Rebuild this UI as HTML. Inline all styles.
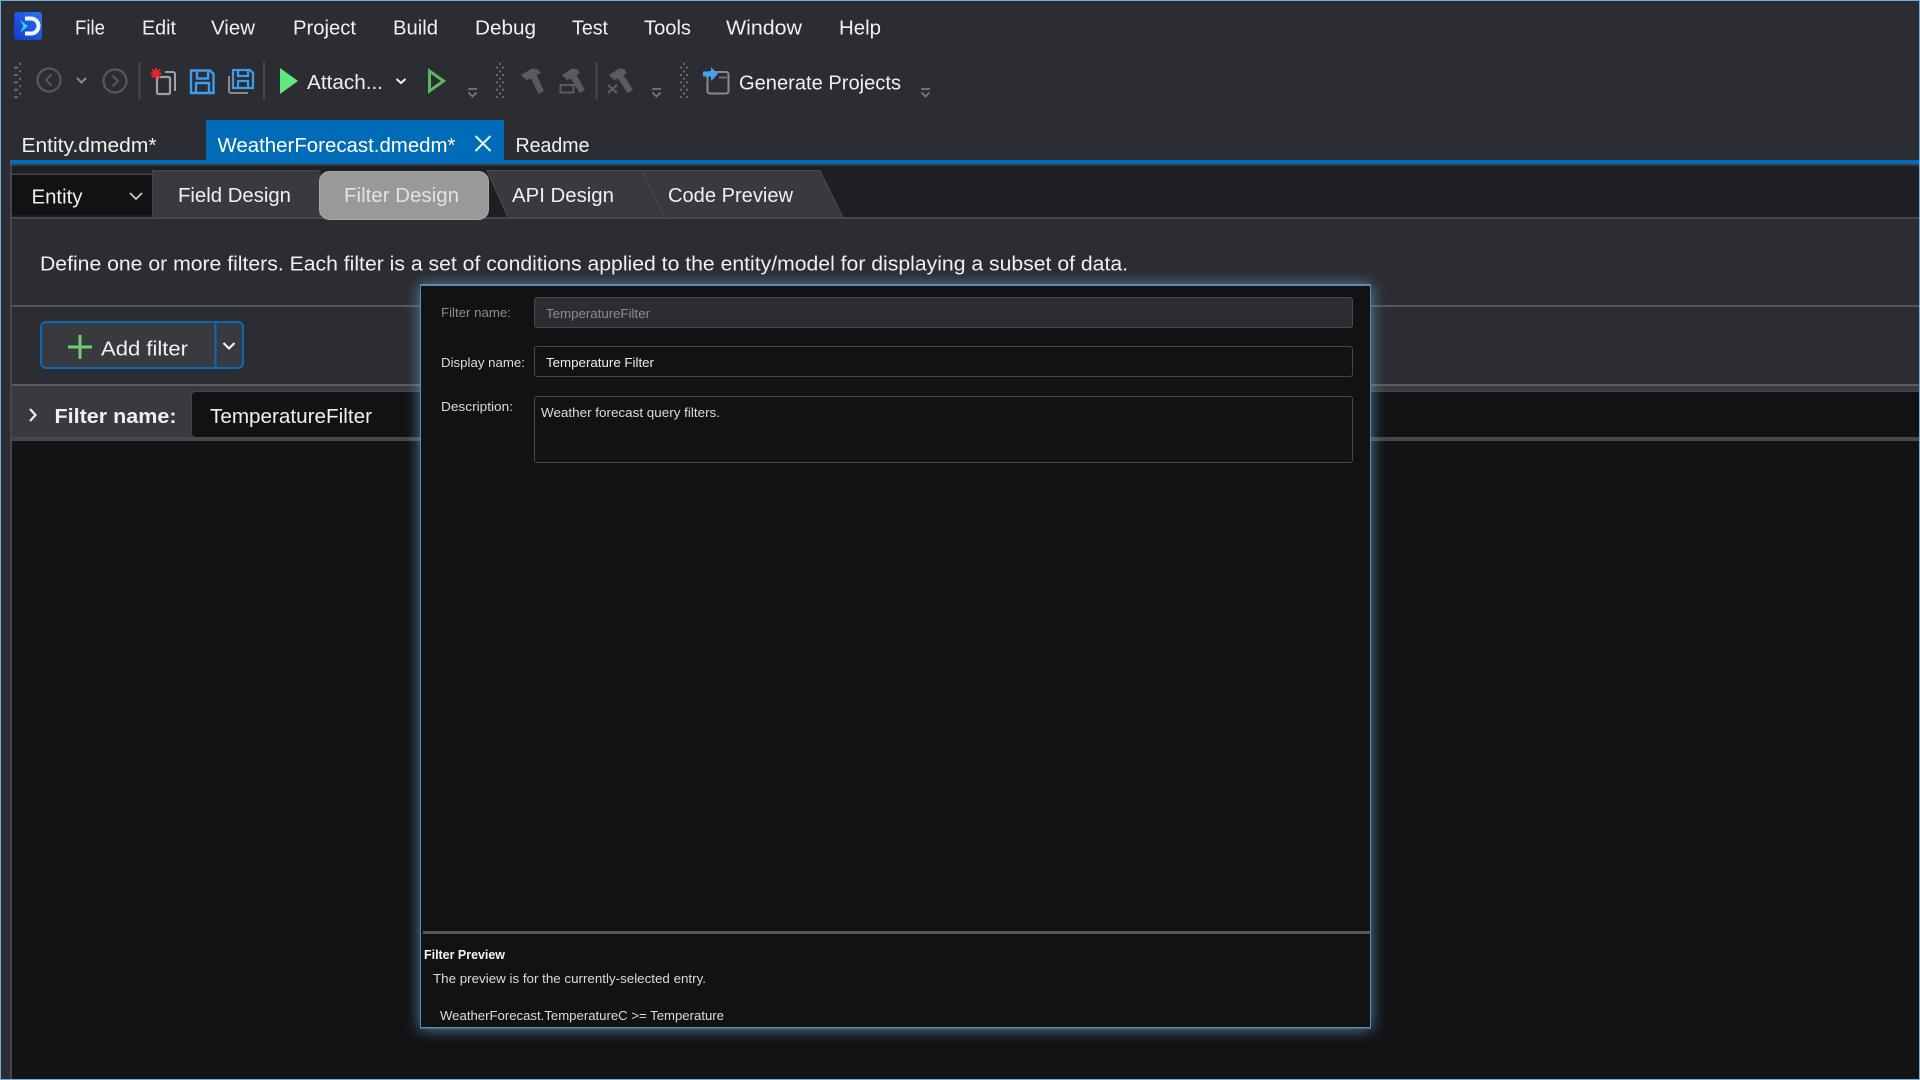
<!DOCTYPE html>
<html lang="en"><head><meta charset="utf-8"><title>Filter Design</title>
<style>
html,body{margin:0;padding:0;width:1920px;height:1080px;overflow:hidden;background:#2c2d33}
svg{display:block}
text{font-family:"Liberation Sans",sans-serif;font-size:20px;fill:#f0f0f0}
.s{font-size:13px;fill:#dcdcdc}
</style></head><body>
<svg width="1920" height="1080" viewBox="0 0 1920 1080" xmlns="http://www.w3.org/2000/svg">
<defs>
<linearGradient id="lg" x1="0" y1="1" x2="1" y2="0"><stop offset="0" stop-color="#1238c8"/><stop offset="1" stop-color="#2b74f2"/></linearGradient>
<filter id="glow" x="-5%" y="-5%" width="110%" height="110%"><feGaussianBlur stdDeviation="7.5"/></filter>
<pattern id="grip" width="8" height="7.4" patternUnits="userSpaceOnUse"><rect x="0" y="0" width="2" height="2" fill="#6a6b70"/><rect x="6" y="0" width="2" height="2" fill="#6a6b70"/><rect x="3" y="3.7" width="2" height="2" fill="#6a6b70"/></pattern>
</defs>
<rect width="1920" height="1080" fill="#2c2d33"/>

<!-- logo -->
<rect x="14" y="12" width="28" height="28" rx="3" fill="url(#lg)"/>
<path d="M25 18.500h6a7.500 7.500 0 0 1 0 15h-6" fill="none" stroke="#f2f6ff" stroke-width="4"/>
<path d="M20 20l8 6-8 7 3.500-7z" fill="#28e0d8"/>

<!-- menu -->
<g>
<text x="75" y="34.500" textLength="30" lengthAdjust="spacingAndGlyphs">File</text>
<text x="142" y="34.500" textLength="34" lengthAdjust="spacingAndGlyphs">Edit</text>
<text x="211" y="34.500" textLength="44" lengthAdjust="spacingAndGlyphs">View</text>
<text x="293" y="34.500" textLength="63" lengthAdjust="spacingAndGlyphs">Project</text>
<text x="393" y="34.500" textLength="45" lengthAdjust="spacingAndGlyphs">Build</text>
<text x="475" y="34.500" textLength="61" lengthAdjust="spacingAndGlyphs">Debug</text>
<text x="572" y="34.500" textLength="36" lengthAdjust="spacingAndGlyphs">Test</text>
<text x="644" y="34.500" textLength="47" lengthAdjust="spacingAndGlyphs">Tools</text>
<text x="726" y="34.500" textLength="76" lengthAdjust="spacingAndGlyphs">Window</text>
<text x="839" y="34.500" textLength="42" lengthAdjust="spacingAndGlyphs">Help</text>
</g>

<!-- toolbar -->
<rect x="13" y="61" width="8" height="37" fill="url(#grip)"/>
<rect x="496" y="61" width="8" height="37" fill="url(#grip)"/>
<rect x="680" y="61" width="8" height="37" fill="url(#grip)"/>
<g fill="none" stroke="#57585c" stroke-width="2.2">
<circle cx="49" cy="80" r="11.500"/><path d="M51.500 74.500L46 80l5.500 5.500"/>
<circle cx="115" cy="81" r="11.500"/><path d="M112.500 75.500L118 81l-5.500 5.500"/>
</g>
<path d="M77 78l4.500 4.500L86 78" fill="none" stroke="#8a8b8f" stroke-width="2"/>
<rect x="138.500" y="62" width="2" height="38" fill="#46474d"/>
<rect x="263" y="62" width="2" height="38" fill="#46474d"/>
<rect x="595.500" y="62" width="2" height="38" fill="#46474d"/>
<!-- new project -->
<path d="M165 72h8a2 2 0 0 1 2 2v17" fill="none" stroke="#a0a1a4" stroke-width="2"/>
<rect x="157" y="77" width="13" height="17" rx="1.500" fill="none" stroke="#a0a1a4" stroke-width="2.200"/>
<path d="M156 68v11M150.500 73.500h11M152 69.500l8 8M160 69.500l-8 8" stroke="#e8242c" stroke-width="2"/>
<!-- save -->
<g fill="none" stroke="#3f9ce8" stroke-width="2.400">
<path d="M191 70.500h19l3.500 3.500v19h-22.500z"/><path d="M197 70.500v8h11v-8"/><path d="M196 93V83h13v10"/>
</g>
<g fill="none" stroke="#3f9ce8" stroke-width="2.200">
<path d="M233 70h17l3 3v15h-20z"/><path d="M238 70v6h10v-6"/><path d="M238 88v-7h10v7"/>
</g>
<path d="M229 76v15a2 2 0 0 0 2 2h17" fill="none" stroke="#8a8b8f" stroke-width="2"/>
<!-- run -->
<path d="M280 68l18 13-18 13z" fill="#5ee87e"/>
<text x="307" y="89" textLength="76" lengthAdjust="spacingAndGlyphs">Attach...</text>
<path d="M396.500 79l4.500 4 4.500-4" fill="none" stroke="#f0f0f0" stroke-width="2"/>
<path d="M429.500 71v20l14-10z" fill="none" stroke="#5cb85c" stroke-width="3"/>
<!-- overflow chevrons -->
<g fill="none" stroke="#77787c" stroke-width="1.800">
<path d="M468 89h9M468.500 92.500l4 4 4-4"/>
<path d="M652 89h9M652.500 92.500l4 4 4-4"/>
<path d="M921 89h9M921.500 92.500l4 4 4-4"/>
</g>
<!-- hammers -->
<g fill="#5a5b5f">
<path d="M521 75L532 68.500L537 69L541 73L536.500 75L544 91L538.500 94L531 78.500L526.500 80z"/>
<path d="M562 75L572 68.500L577 69L580 73L576.500 75L585 90L579.500 93L571 78.500L567 80z"/>
<path d="M609 75L619 68.500L624 69L627 73L623.500 75L633 90L627.500 93L618 78.500L614 80z"/>
</g>
<rect x="560.500" y="85" width="13" height="7.500" fill="none" stroke="#5a5b5f" stroke-width="2"/>
<path d="M608 85l9 8M617 85l-9 8" stroke="#5a5b5f" stroke-width="2.500"/>
<!-- generate -->
<rect x="707.500" y="72" width="21" height="21.500" rx="2.500" fill="none" stroke="#8a8b8f" stroke-width="2"/>
<path d="M719 77.500h8" stroke="#6a6b70" stroke-width="2"/>
<path d="M703 71.500h8V67l7 7-7 7v-4.500h-8z" fill="#3fa4f0"/>
<text x="739" y="89.500" textLength="162" lengthAdjust="spacingAndGlyphs">Generate Projects</text>

<!-- doc tabs -->
<rect x="206" y="120" width="298" height="42" fill="#006bb7"/>
<rect x="10" y="160" width="1909" height="4" fill="#006bb7"/>
<text x="21.500" y="152" textLength="135" lengthAdjust="spacingAndGlyphs">Entity.dmedm*</text>
<text x="217.500" y="152" textLength="238" lengthAdjust="spacingAndGlyphs" style="fill:#fff">WeatherForecast.dmedm*</text>
<path d="M475.500 136l15 15M490.500 136l-15 15" stroke="#e8f2fa" stroke-width="2"/>
<text x="515.500" y="152" textLength="74" lengthAdjust="spacingAndGlyphs">Readme</text>

<!-- subtab row -->
<rect x="10" y="164" width="1910" height="2" fill="#3a3b41"/>
<rect x="10" y="166" width="1910" height="52" fill="#1e1f23"/>
<rect x="10" y="164" width="2" height="142" fill="#46474d"/>
<rect x="12" y="175" width="140" height="40" fill="#111214"/>
<rect x="12" y="173.500" width="140" height="1.500" fill="#46474d"/>
<text x="31.500" y="203.500" textLength="51" lengthAdjust="spacingAndGlyphs">Entity</text>
<path d="M130 193l6 6 6-6" fill="none" stroke="#c8c8c8" stroke-width="1.800"/>
<path d="M152.500 170.500H320V217.500H152.500z" fill="#383a40" stroke="#46474d"/>
<text x="178" y="202" textLength="113" lengthAdjust="spacingAndGlyphs">Field Design</text>
<path d="M642 170.500H820L843 217.500H665z" fill="#383a40" stroke="#4a4b51"/>
<path d="M487 170.500H642L665 217.500H508z" fill="#383a40" stroke="#4a4b51"/>
<rect x="10" y="217" width="1910" height="2" fill="#46474d"/>
<rect x="319.500" y="171.500" width="169" height="48" rx="10" fill="#98999b" stroke="#a9aaac"/>
<text x="344" y="202" textLength="115" lengthAdjust="spacingAndGlyphs" style="fill:#e2e2e2">Filter Design</text>
<text x="512" y="202" textLength="102" lengthAdjust="spacingAndGlyphs">API Design</text>
<text x="668" y="202" textLength="125" lengthAdjust="spacingAndGlyphs">Code Preview</text>

<!-- description -->
<text x="40" y="270.500" textLength="1088" lengthAdjust="spacingAndGlyphs">Define one or more filters. Each filter is a set of conditions applied to the entity/model for displaying a subset of data.</text>
<rect x="10" y="305" width="1910" height="2" fill="#55565b"/>
<rect x="10" y="306" width="2" height="774" fill="#46474d"/>

<!-- add filter -->
<rect x="41" y="322" width="202" height="46" rx="5" fill="#383a40" stroke="#0a6ab5" stroke-width="2"/>
<rect x="214.500" y="322" width="2" height="46" fill="#0a6ab5"/>
<path d="M80 335v24M68 347h24" stroke="#6fcf6f" stroke-width="3"/>
<text x="101" y="355.500" textLength="87" lengthAdjust="spacingAndGlyphs">Add filter</text>
<path d="M223.500 343l5.500 5.500 5.500-5.500" fill="none" stroke="#f0f0f0" stroke-width="2.200"/>

<!-- filter row -->
<rect x="12" y="384" width="1908" height="2" fill="#5a5b60"/>
<rect x="12" y="386" width="1908" height="56" fill="#383a40"/>
<path d="M30 409l5.500 6-5.500 6" fill="none" stroke="#f0f0f0" stroke-width="2.200"/>
<text x="54.500" y="423" textLength="122" lengthAdjust="spacingAndGlyphs" font-weight="700">Filter name:</text>
<rect x="191.500" y="391.500" width="1730" height="46" rx="4" fill="#111214" stroke="#46474d"/>
<text x="210" y="423" textLength="162" lengthAdjust="spacingAndGlyphs">TemperatureFilter</text>
<rect x="12" y="437" width="1908" height="4" fill="#46474d"/>
<rect x="12" y="441" width="1908" height="638" fill="#121315"/>

<!-- modal glow -->
<rect x="420" y="285" width="951" height="744" fill="#6aa8d8" opacity=".75" filter="url(#glow)"/>
<rect x="420" y="284" width="951" height="744.500" fill="#5f8aa8"/>
<rect x="421" y="286" width="949" height="741" fill="#111214"/>

<text class="s" x="441" y="317" textLength="70" lengthAdjust="spacingAndGlyphs" style="fill:#8c8d90">Filter name:</text>
<rect x="534.500" y="297.500" width="818" height="30" rx="2.500" fill="#2c2d33" stroke="#46474d"/>
<text class="s" x="546" y="318" textLength="104" lengthAdjust="spacingAndGlyphs" style="fill:#8c8d90">TemperatureFilter</text>
<text class="s" x="441" y="367" textLength="84" lengthAdjust="spacingAndGlyphs">Display name:</text>
<rect x="534.500" y="346.500" width="818" height="30" rx="2.500" fill="#111214" stroke="#46474d"/>
<text class="s" x="546" y="367" textLength="108" lengthAdjust="spacingAndGlyphs" style="fill:#f0f0f0">Temperature Filter</text>
<text class="s" x="441" y="411" textLength="72" lengthAdjust="spacingAndGlyphs">Description:</text>
<rect x="534.500" y="396.500" width="818" height="66" rx="2.500" fill="#111214" stroke="#46474d"/>
<text class="s" x="541" y="417" textLength="179" lengthAdjust="spacingAndGlyphs">Weather forecast query filters.</text>

<rect x="423" y="931" width="947" height="3" fill="#55565b"/>
<text class="s" x="424" y="959" textLength="81" lengthAdjust="spacingAndGlyphs" font-weight="700" style="fill:#f4f4f4">Filter Preview</text>
<text class="s" x="433" y="983" textLength="273" lengthAdjust="spacingAndGlyphs">The preview is for the currently-selected entry.</text>
<text class="s" x="440" y="1020" textLength="284" lengthAdjust="spacingAndGlyphs">WeatherForecast.TemperatureC &gt;= Temperature</text>

<!-- window border -->
<rect x="0" y="0" width="1920" height="1" fill="#6fb0dc"/>
<rect x="0" y="1079" width="1920" height="1" fill="#6fb0dc"/>
<rect x="0" y="0" width="1" height="1080" fill="#6fb0dc"/>
<rect x="1919" y="0" width="1" height="1080" fill="#6fb0dc"/>
</svg>
</body></html>
